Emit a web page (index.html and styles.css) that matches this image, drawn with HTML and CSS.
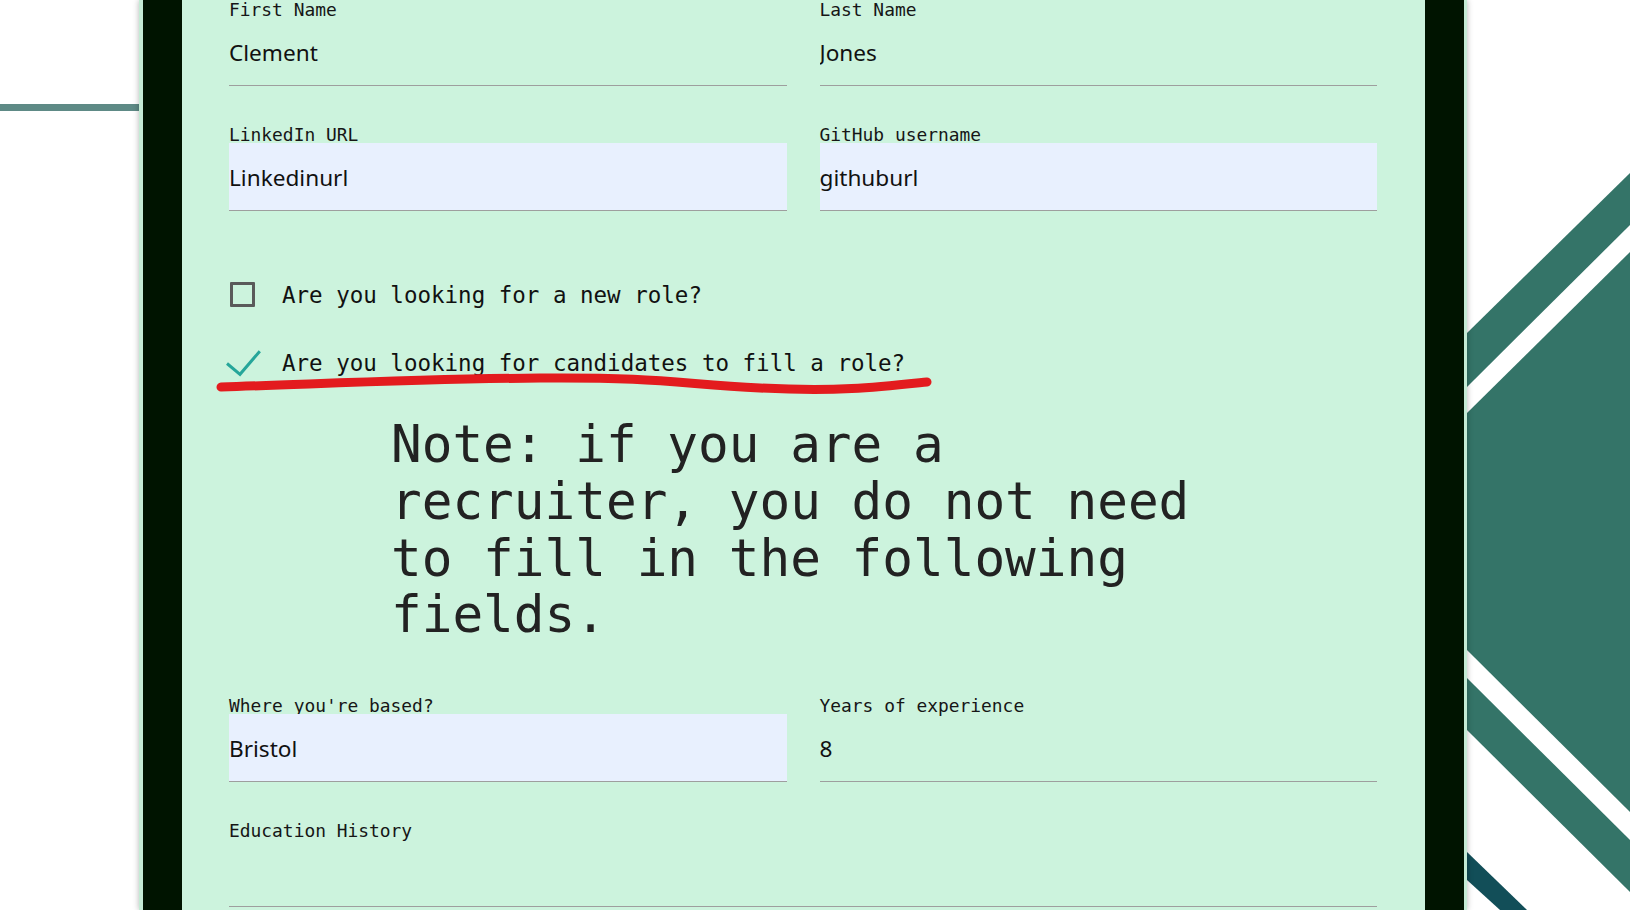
FILE: index.html
```html
<!DOCTYPE html>
<html lang="en">
<head>
<meta charset="utf-8">
<title>Profile form</title>
<link rel="stylesheet" href="styles.css">
</head>
<body>
<div class="page">
  <aside class="left-deco"><div class="deco-line"></div></aside>
  <main class="card">
    <div class="frame">
      <form class="form">
        <div class="grid2">
          <div class="field">
            <label class="flabel">First Name</label>
            <input class="finput" type="text" value="Clement">
          </div>
          <div class="field">
            <label class="flabel">Last Name</label>
            <input class="finput" type="text" value="Jones">
          </div>
        </div>
        <div class="grid2 row">
          <div class="field">
            <label class="flabel">LinkedIn URL</label>
            <input class="finput autofill" type="text" value="Linkedinurl">
          </div>
          <div class="field">
            <label class="flabel">GitHub username</label>
            <input class="finput autofill" type="text" value="githuburl">
          </div>
        </div>
        <div class="checks">
          <div class="check-row"><span class="box"></span><span class="ctext">Are you looking for a new role?</span></div>
          <div class="check-row">
            <svg class="tick" viewBox="0 0 25 25" aria-hidden="true"><polyline points="-3,13.5 10,24.3 29.8,1.2" fill="none" stroke="#26a69a" stroke-width="3" stroke-linejoin="miter"/></svg>
            <span class="ctext">Are you looking for candidates to fill a role?</span>
          </div>
          <svg class="scribble" viewBox="200 367 740 35" aria-hidden="true"><path d="M221 387 C 320 384, 420 379, 540 378 S 680 384, 760 388 S 880 387, 927 382" fill="none" stroke="#e31b1e" stroke-width="9" stroke-linecap="round"/></svg>
        </div>
        <h4 class="note">Note: if you are a recruiter, you do not need to fill in the following fields.</h4>
        <div class="grid2 row-b">
          <div class="field">
            <label class="flabel">Where you're based?</label>
            <input class="finput autofill" type="text" value="Bristol">
          </div>
          <div class="field">
            <label class="flabel">Years of experience</label>
            <input class="finput" type="text" value="8">
          </div>
        </div>
        <div class="field row-e">
          <label class="flabel">Education History</label>
          <textarea class="finput area"></textarea>
        </div>
      </form>
    </div>
  </main>
  <aside class="right-deco">
    <svg class="deco-svg" viewBox="1467 0 163 910" aria-hidden="true">
      <polygon points="1630,173 1630,225 1467,387 1467,333" fill="#347468"/>
      <polygon points="1630,252 1630,812 1467,650 1467,413" fill="#347468"/>
      <polygon points="1467,678 1630,840 1630,892 1467,730" fill="#347468"/>
      <polygon points="1467,852 1527,910 1500,910 1467,880" fill="#124e58"/>
    </svg>
  </aside>
</div>
</body>
</html>
```
FILE: styles.css
```css
html, body {
  margin: 0;
  padding: 0;
}
body {
  width: 1630px;
  height: 910px;
  overflow: hidden;
  background: #ffffff;
  font-family: "Noto Sans", sans-serif;
}
.page {
  display: flex;
  height: 910px;
}
.left-deco {
  width: 139px;
  flex: none;
}
.deco-line {
  margin-top: 104px;
  height: 7px;
  background: #5e8a86;
}
.card {
  width: 1328px;
  flex: none;
  box-sizing: border-box;
  padding: 0 3px 0 4px;
  background: #c4ebd5;
  box-shadow: 0 0 6px rgba(0, 0, 0, 0.3);
  position: relative;
  z-index: 1;
}
.frame {
  height: 910px;
  border-left: 39px solid #001400;
  border-right: 39px solid #001400;
  background: #ccf3dd;
}
.form {
  padding: 2px 48px 0 47px;
}
.grid2 {
  display: grid;
  grid-template-columns: 1fr 1fr;
  column-gap: 33px;
}
.row {
  margin-top: 41px;
}
.row-b {
  margin-top: 54px;
}
.row-e {
  margin-top: 41px;
}
.field {
  display: flex;
  flex-direction: column;
}
.flabel {
  display: block;
  font: 17.9px/16px "DejaVu Sans Mono", monospace;
  color: #161616;
  margin-bottom: 0;
  white-space: nowrap;
}
.finput {
  position: relative;
  display: block;
  width: 100%;
  height: 68px;
  box-sizing: border-box;
  border: 0;
  border-bottom: 1px solid #9e9e9e;
  border-radius: 0;
  background: transparent;
  font: 22.6px "Noto Sans", sans-serif;
  color: #111111;
  padding: 2px 0 0 0;
  margin: 0;
  outline: none;
}
.autofill {
  background: #e8f0fe;
}
.area {
  resize: none;
  overflow: hidden;
}
.checks {
  position: relative;
  margin-top: 66px;
  display: flex;
  flex-direction: column;
  gap: 33px;
}
.check-row {
  display: flex;
  align-items: center;
  height: 35px;
  font: 22.5px/35px "DejaVu Sans Mono", monospace;
  color: #111111;
  white-space: nowrap;
}
.ctext {
  padding-top: 2px;
}
.box {
  width: 25px;
  height: 25px;
  box-sizing: border-box;
  border: 3px solid #5a5a5a;
  border-radius: 1px;
  margin-left: 1px;
  margin-right: 27px;
  flex: none;
}
.tick {
  width: 25px;
  height: 25px;
  overflow: visible;
  margin-left: 1px;
  margin-right: 27px;
  flex: none;
}
.scribble {
  position: absolute;
  left: -29px;
  top: 90px;
  width: 740px;
  height: 35px;
  overflow: visible;
}
.note {
  margin: 37px 0 0 162px;
  width: 840px;
  font: 51px/56.8px "DejaVu Sans Mono", monospace;
  font-weight: normal;
  color: #222222;
}
.right-deco {
  width: 163px;
  flex: none;
}
.deco-svg {
  display: block;
  width: 163px;
  height: 910px;
}
```
